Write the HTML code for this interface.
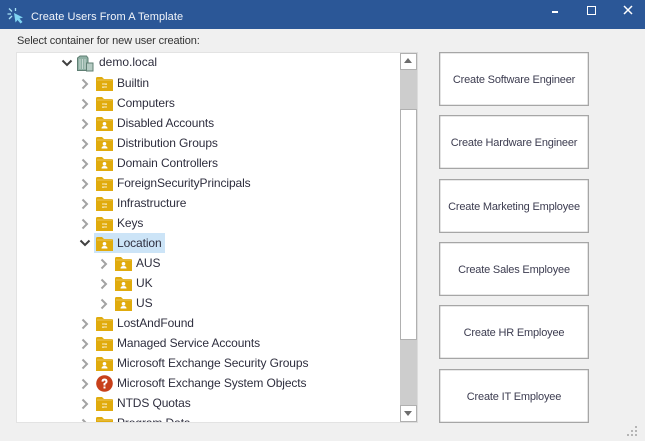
<!DOCTYPE html>
<html><head><meta charset="utf-8">
<style>
html,body{margin:0;padding:0}
body{width:645px;height:441px;overflow:hidden;background:#f0f0f0;position:relative;font-family:"Liberation Sans",sans-serif;font-size:12px;color:#2b2b3a}
.a{position:absolute}
#bar{left:0;top:0;width:645px;height:29px;background:#2b5797}
#title{left:31px;top:10px;color:#f2f5fa;font-size:11px;letter-spacing:.07px;white-space:nowrap;line-height:15px}
#lab{left:17px;top:34px;white-space:nowrap;line-height:14px;color:#333;font-size:11px;letter-spacing:-.13px}
#tree{left:16px;top:52px;width:384px;height:370px;background:#fff;overflow:hidden;border-top:1px solid #e3e3e3;border-left:1px solid #e3e3e3;box-sizing:border-box}
#sb{left:400px;top:52px;width:18px;height:371px;background:#cdcdcd;box-shadow:inset -1px 0 0 #dcdcdc,inset 0 1px 0 #dcdcdc,inset 0 -1px 0 #dcdcdc}
.sbb{position:absolute;left:0;width:15px;background:#fff;border:1px solid #b0b0b0;box-sizing:content-box}
.btn{position:absolute;left:439px;width:150px;height:54px;box-sizing:border-box;background:#fff;border:1px solid #a6a6a6;text-align:center;line-height:54px;color:#3c3c50;white-space:nowrap;font-size:11px;letter-spacing:-.18px;box-shadow:inset 0 0 0 .3px #a6a6a6}
.t{position:absolute;white-space:nowrap;line-height:15px;color:#2e2e3e;letter-spacing:-.1px}
svg.i{position:absolute;overflow:visible}
</style></head><body>
<svg width="0" height="0" style="position:absolute">
<defs>
<symbol id="f" viewBox="0 0 17 14"><path d="M0 1.500Q0 0 1.500 0H6L8 2H15.500Q17 2 17 3.500V14H0Z" fill="#e0ab0d"/><path d="M1 3H16" stroke="#ecc65a" stroke-width="1"/></symbol>
<symbol id="fa" viewBox="0 0 17 14"><use href="#f" width="17" height="14"/><path d="M6 7H11M6 10H11M10 6.500V8M7 9.500V11" stroke="#fbeec2" stroke-width="1" fill="none"/></symbol>
<symbol id="fu" viewBox="0 0 17 14"><use href="#f" width="17" height="14"/><circle cx="8.500" cy="6.800" r="1.800" fill="#fff"/><path d="M5.500 11.500Q5.500 9 8.500 9T11.500 11.500Z" fill="#fff"/></symbol>
<symbol id="cr" viewBox="0 0 8 12"><path d="M1.500 1.500L6 6L1.500 10.500" fill="none" stroke="#a3a3a3" stroke-width="2"/></symbol>
<symbol id="cd" viewBox="0 0 12 8"><path d="M1.500 1.500L6 6L10.500 1.500" fill="none" stroke="#404040" stroke-width="2"/></symbol>
</defs></svg>

<div class="a" id="bar"></div>
<svg class="i" style="left:7px;top:8px" width="17" height="16" viewBox="0 0 17 16">
<path d="M7 5L16 9.500L12.500 10.500L15.500 14L13.500 15.500L10.500 12L8.500 14.500Z" fill="#7fd3f2"/>
<path d="M2 0.500L5 3.500M8.500 0L8.500 3M0.500 6H4M2 11L5 8" stroke="#a9e2f7" stroke-width="1.300"/>
</svg>
<div class="a" id="title">Create Users From A Template</div>
<div class="a" style="left:552px;top:11px;width:6px;height:2px;background:#fff"></div>
<div class="a" style="left:587px;top:6px;width:7px;height:7px;border:1px solid #fff"></div>
<svg class="i" style="left:623px;top:5px" width="10" height="10" viewBox="0 0 10 10"><path d="M1 1L9 9M9 1L1 9" stroke="#fff" stroke-width="1.500"/></svg>

<div class="a" id="lab">Select container for new user creation:</div>

<div class="a" id="tree"></div>
<div class="a" style="left:17px;top:53px;width:383px;height:369px;overflow:hidden" id="rows">
<div class="a" style="left:77px;top:180px;width:71px;height:20px;background:#cce4f7"></div>

<svg class="i" style="left:44px;top:6px" width="12" height="8"><use href="#cd" width="12" height="8"/></svg>
<svg class="i" style="left:60px;top:2px" width="17" height="17" viewBox="0 0 17 17"><path d="M0.500 3L3 1H9.500L11 3V15.500H0.500Z" fill="#8fb0a4" stroke="#5f7f73"/><path d="M3 4V14M5.500 4V14M8 4V14" stroke="#c8d8d2"/><rect x="9.500" y="8" width="6.500" height="8" fill="#b5cbc3" stroke="#5f7f73"/></svg>
<div class="t" style="left:82px;top:2px;letter-spacing:0">demo.local</div>

<svg class="i" style="left:64px;top:25px" width="8" height="12"><use href="#cr" width="8" height="12"/></svg>
<svg class="i" style="left:79px;top:24px" width="17" height="14"><use href="#fa" width="17" height="14"/></svg>
<div class="t" style="left:100px;top:23px">Builtin</div>

<svg class="i" style="left:64px;top:45px" width="8" height="12"><use href="#cr" width="8" height="12"/></svg>
<svg class="i" style="left:79px;top:44px" width="17" height="14"><use href="#fa" width="17" height="14"/></svg>
<div class="t" style="left:100px;top:43px">Computers</div>

<svg class="i" style="left:64px;top:65px" width="8" height="12"><use href="#cr" width="8" height="12"/></svg>
<svg class="i" style="left:79px;top:64px" width="17" height="14"><use href="#fu" width="17" height="14"/></svg>
<div class="t" style="left:100px;top:63px">Disabled Accounts</div>

<svg class="i" style="left:64px;top:85px" width="8" height="12"><use href="#cr" width="8" height="12"/></svg>
<svg class="i" style="left:79px;top:84px" width="17" height="14"><use href="#fu" width="17" height="14"/></svg>
<div class="t" style="left:100px;top:83px">Distribution Groups</div>

<svg class="i" style="left:64px;top:105px" width="8" height="12"><use href="#cr" width="8" height="12"/></svg>
<svg class="i" style="left:79px;top:104px" width="17" height="14"><use href="#fu" width="17" height="14"/></svg>
<div class="t" style="left:100px;top:103px">Domain Controllers</div>

<svg class="i" style="left:64px;top:125px" width="8" height="12"><use href="#cr" width="8" height="12"/></svg>
<svg class="i" style="left:79px;top:124px" width="17" height="14"><use href="#fa" width="17" height="14"/></svg>
<div class="t" style="left:100px;top:123px">ForeignSecurityPrincipals</div>

<svg class="i" style="left:64px;top:145px" width="8" height="12"><use href="#cr" width="8" height="12"/></svg>
<svg class="i" style="left:79px;top:144px" width="17" height="14"><use href="#fa" width="17" height="14"/></svg>
<div class="t" style="left:100px;top:143px">Infrastructure</div>

<svg class="i" style="left:64px;top:165px" width="8" height="12"><use href="#cr" width="8" height="12"/></svg>
<svg class="i" style="left:79px;top:164px" width="17" height="14"><use href="#fa" width="17" height="14"/></svg>
<div class="t" style="left:100px;top:163px">Keys</div>

<svg class="i" style="left:62px;top:186px" width="12" height="8"><use href="#cd" width="12" height="8"/></svg>
<svg class="i" style="left:79px;top:184px" width="17" height="14"><use href="#fu" width="17" height="14"/></svg>
<div class="t" style="left:100px;top:183px">Location</div>

<svg class="i" style="left:83px;top:205px" width="8" height="12"><use href="#cr" width="8" height="12"/></svg>
<svg class="i" style="left:98px;top:204px" width="17" height="14"><use href="#fu" width="17" height="14"/></svg>
<div class="t" style="left:119px;top:203px">AUS</div>

<svg class="i" style="left:83px;top:225px" width="8" height="12"><use href="#cr" width="8" height="12"/></svg>
<svg class="i" style="left:98px;top:224px" width="17" height="14"><use href="#fu" width="17" height="14"/></svg>
<div class="t" style="left:119px;top:223px">UK</div>

<svg class="i" style="left:83px;top:245px" width="8" height="12"><use href="#cr" width="8" height="12"/></svg>
<svg class="i" style="left:98px;top:244px" width="17" height="14"><use href="#fu" width="17" height="14"/></svg>
<div class="t" style="left:119px;top:243px">US</div>

<svg class="i" style="left:64px;top:265px" width="8" height="12"><use href="#cr" width="8" height="12"/></svg>
<svg class="i" style="left:79px;top:264px" width="17" height="14"><use href="#fa" width="17" height="14"/></svg>
<div class="t" style="left:100px;top:263px">LostAndFound</div>

<svg class="i" style="left:64px;top:285px" width="8" height="12"><use href="#cr" width="8" height="12"/></svg>
<svg class="i" style="left:79px;top:284px" width="17" height="14"><use href="#fa" width="17" height="14"/></svg>
<div class="t" style="left:100px;top:283px">Managed Service Accounts</div>

<svg class="i" style="left:64px;top:305px" width="8" height="12"><use href="#cr" width="8" height="12"/></svg>
<svg class="i" style="left:79px;top:304px" width="17" height="14"><use href="#fu" width="17" height="14"/></svg>
<div class="t" style="left:100px;top:303px">Microsoft Exchange Security Groups</div>

<svg class="i" style="left:64px;top:325px" width="8" height="12"><use href="#cr" width="8" height="12"/></svg>
<svg class="i" style="left:79px;top:322px" width="17" height="17" viewBox="0 0 17 17"><circle cx="8.500" cy="8.500" r="8.300" fill="#c8401a"/><path d="M5.500 6.500Q5.500 3.500 8.500 3.500T11.500 6.500Q11.500 8 9.500 9L9.500 10.500H7.500V8.300Q9.500 7.500 9.500 6.500Q9.500 5.500 8.500 5.500T7.500 6.800Z" fill="#fff"/><rect x="7.500" y="11.500" width="2" height="2" fill="#fff"/></svg>
<div class="t" style="left:100px;top:323px">Microsoft Exchange System Objects</div>

<svg class="i" style="left:64px;top:345px" width="8" height="12"><use href="#cr" width="8" height="12"/></svg>
<svg class="i" style="left:79px;top:344px" width="17" height="14"><use href="#fa" width="17" height="14"/></svg>
<div class="t" style="left:100px;top:343px">NTDS Quotas</div>

<svg class="i" style="left:64px;top:365px" width="8" height="12"><use href="#cr" width="8" height="12"/></svg>
<svg class="i" style="left:79px;top:364px" width="17" height="14"><use href="#fa" width="17" height="14"/></svg>
<div class="t" style="left:100px;top:363px">Program Data</div>
</div>

<div class="a" style="left:16px;top:422px;width:384px;height:1px;background:#e3e3e3"></div>

<div class="a" id="sb">
<div class="sbb" style="top:1px;height:15px"></div>
<div class="a" style="left:4px;top:6px;width:0;height:0;border-left:4.500px solid transparent;border-right:4.500px solid transparent;border-bottom:5px solid #6d6d6d"></div>
<div class="sbb" style="top:57px;height:229px"></div>
<div class="sbb" style="top:353px;height:15px"></div>
<div class="a" style="left:4px;top:359px;width:0;height:0;border-left:4.500px solid transparent;border-right:4.500px solid transparent;border-top:5px solid #6d6d6d"></div>
</div>

<div class="btn" style="top:52px">Create Software Engineer</div>
<div class="btn" style="top:115px">Create Hardware Engineer</div>
<div class="btn" style="top:179px">Create Marketing Employee</div>
<div class="btn" style="top:242px">Create Sales Employee</div>
<div class="btn" style="top:305px">Create HR Employee</div>
<div class="btn" style="top:369px">Create IT Employee</div>

<svg class="i" style="left:627px;top:425px" width="12" height="12" viewBox="0 0 12 12"><path d="M8 1h2v2H8zM4 5h2v2H4zM8 5h2v2H8zM0 9h2v2H0zM4 9h2v2H4zM8 9h2v2H8z" fill="#b5b5b5"/></svg>
</body></html>
